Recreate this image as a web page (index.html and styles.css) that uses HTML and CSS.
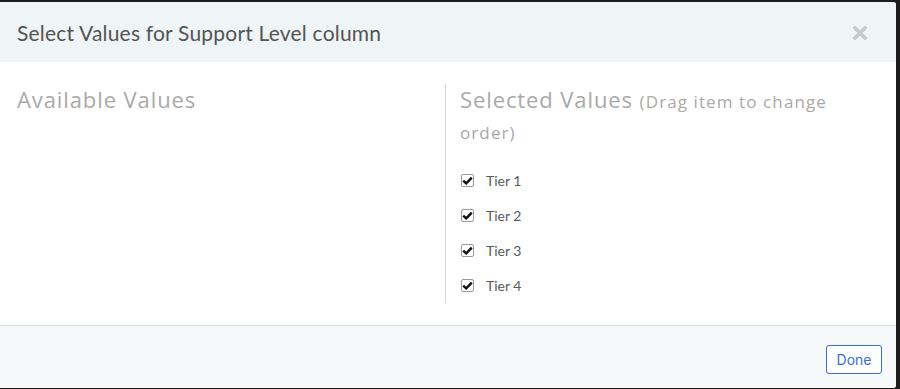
FILE: index.html
```html
<!DOCTYPE html>
<html lang="en">
<head>
    <meta charset="UTF-8">
    <meta name="viewport" content="width=device-width, initial-scale=1.0">
    <title>Select Values</title>
    <link rel="stylesheet" href="styles.css">
</head>
<body>
    <div class="modal">
        <div class="modal-header">
            <h2 class="modal-title">Select Values for Support Level column</h2>
            <button class="close-btn" aria-label="Close">
                <svg width="14" height="14" viewBox="0 0 14 14">
                    <path d="M2 2 L12 12 M12 2 L2 12" stroke="#c6c8ca" stroke-width="3.6" stroke-linecap="square"/>
                </svg>
            </button>
        </div>
        <div class="modal-body">
            <div class="column available">
                <h3 class="column-title">Available Values</h3>
            </div>
            <div class="column selected">
                <h3 class="column-title">Selected Values <small>(Drag item to change order)</small></h3>
                <ul class="value-list">
                    <li><span class="check"><svg width="11" height="9" viewBox="0 0 11 9"><path d="M1.2 4.6 L4.2 7.4 L9.8 1.6" fill="none" stroke="#111" stroke-width="2.4"/></svg></span>Tier 1</li>
                    <li><span class="check"><svg width="11" height="9" viewBox="0 0 11 9"><path d="M1.2 4.6 L4.2 7.4 L9.8 1.6" fill="none" stroke="#111" stroke-width="2.4"/></svg></span>Tier 2</li>
                    <li><span class="check"><svg width="11" height="9" viewBox="0 0 11 9"><path d="M1.2 4.6 L4.2 7.4 L9.8 1.6" fill="none" stroke="#111" stroke-width="2.4"/></svg></span>Tier 3</li>
                    <li><span class="check"><svg width="11" height="9" viewBox="0 0 11 9"><path d="M1.2 4.6 L4.2 7.4 L9.8 1.6" fill="none" stroke="#111" stroke-width="2.4"/></svg></span>Tier 4</li>
                </ul>
            </div>
        </div>
        <div class="modal-footer">
            <button class="done-btn">Done</button>
        </div>
    </div>
</body>
</html>
```

FILE: styles.css
```css
/* General Styling */
body {
    margin: 0;
    background: #1b1b1b;
    font-family: 'Lato', 'Open Sans', sans-serif;
}

.modal {
    width: 896px;
    height: 386px;
    margin-top: 2px;
    background: #fff;
    border-radius: 0 3px 3px 0;
    overflow: hidden;
    display: flex;
    flex-direction: column;
}

.modal-header {
    height: 60px;
    flex-shrink: 0;
    background: #eff4f7;
    display: flex;
    align-items: center;
    justify-content: space-between;
    padding: 0 29px 0 17px;
}

.modal-title {
    margin: 0;
    font-size: 21px;
    font-weight: 400;
    letter-spacing: 0.2px;
    color: #545454;
}

.close-btn {
    border: none;
    background: none;
    padding: 0;
    margin-top: 2px;
    display: flex;
    cursor: pointer;
}

.modal-body {
    display: flex;
    flex-shrink: 0;
    padding: 22px 16px 22px 17px;
    border-bottom: 1px solid #dcdcdc;
}

.column.available {
    width: 428px;
}

.column.selected {
    flex: 1;
    border-left: 1px solid #d6d6d6;
    padding-left: 14px;
}

.column-title {
    margin: 0;
    font-family: 'Open Sans', sans-serif;
    font-size: 22px;
    font-weight: 400;
    letter-spacing: 0.9px;
    line-height: 31px;
    color: #a9a9a9;
}

.column-title small {
    font-size: 17px;
    line-height: 1;
    letter-spacing: 1.1px;
}

.value-list {
    list-style: none;
    margin: 17px 0 0;
    padding: 0;
}

.value-list li {
    height: 35px;
    display: flex;
    align-items: center;
    font-size: 14px;
    color: #5a5a5a;
    padding-left: 1px;
}

.check {
    width: 11px;
    height: 11px;
    border: 1px solid #9a9a9a;
    border-radius: 2px;
    display: flex;
    align-items: center;
    justify-content: center;
    margin-right: 12px;
}

.modal-footer {
    flex: 1;
    background: #f7f8fa;
    display: flex;
    align-items: center;
    justify-content: flex-end;
    padding: 0 14px 0 0;
}

.done-btn {
    width: 56px;
    height: 29px;
    margin-top: 5px;
    border: 1px solid #3a6fd8;
    border-radius: 3px;
    background: #fff;
    color: #3a6fd8;
    font-family: 'Inter', 'Open Sans', sans-serif;
    font-size: 14px;
    padding: 0;
    cursor: pointer;
}
```
